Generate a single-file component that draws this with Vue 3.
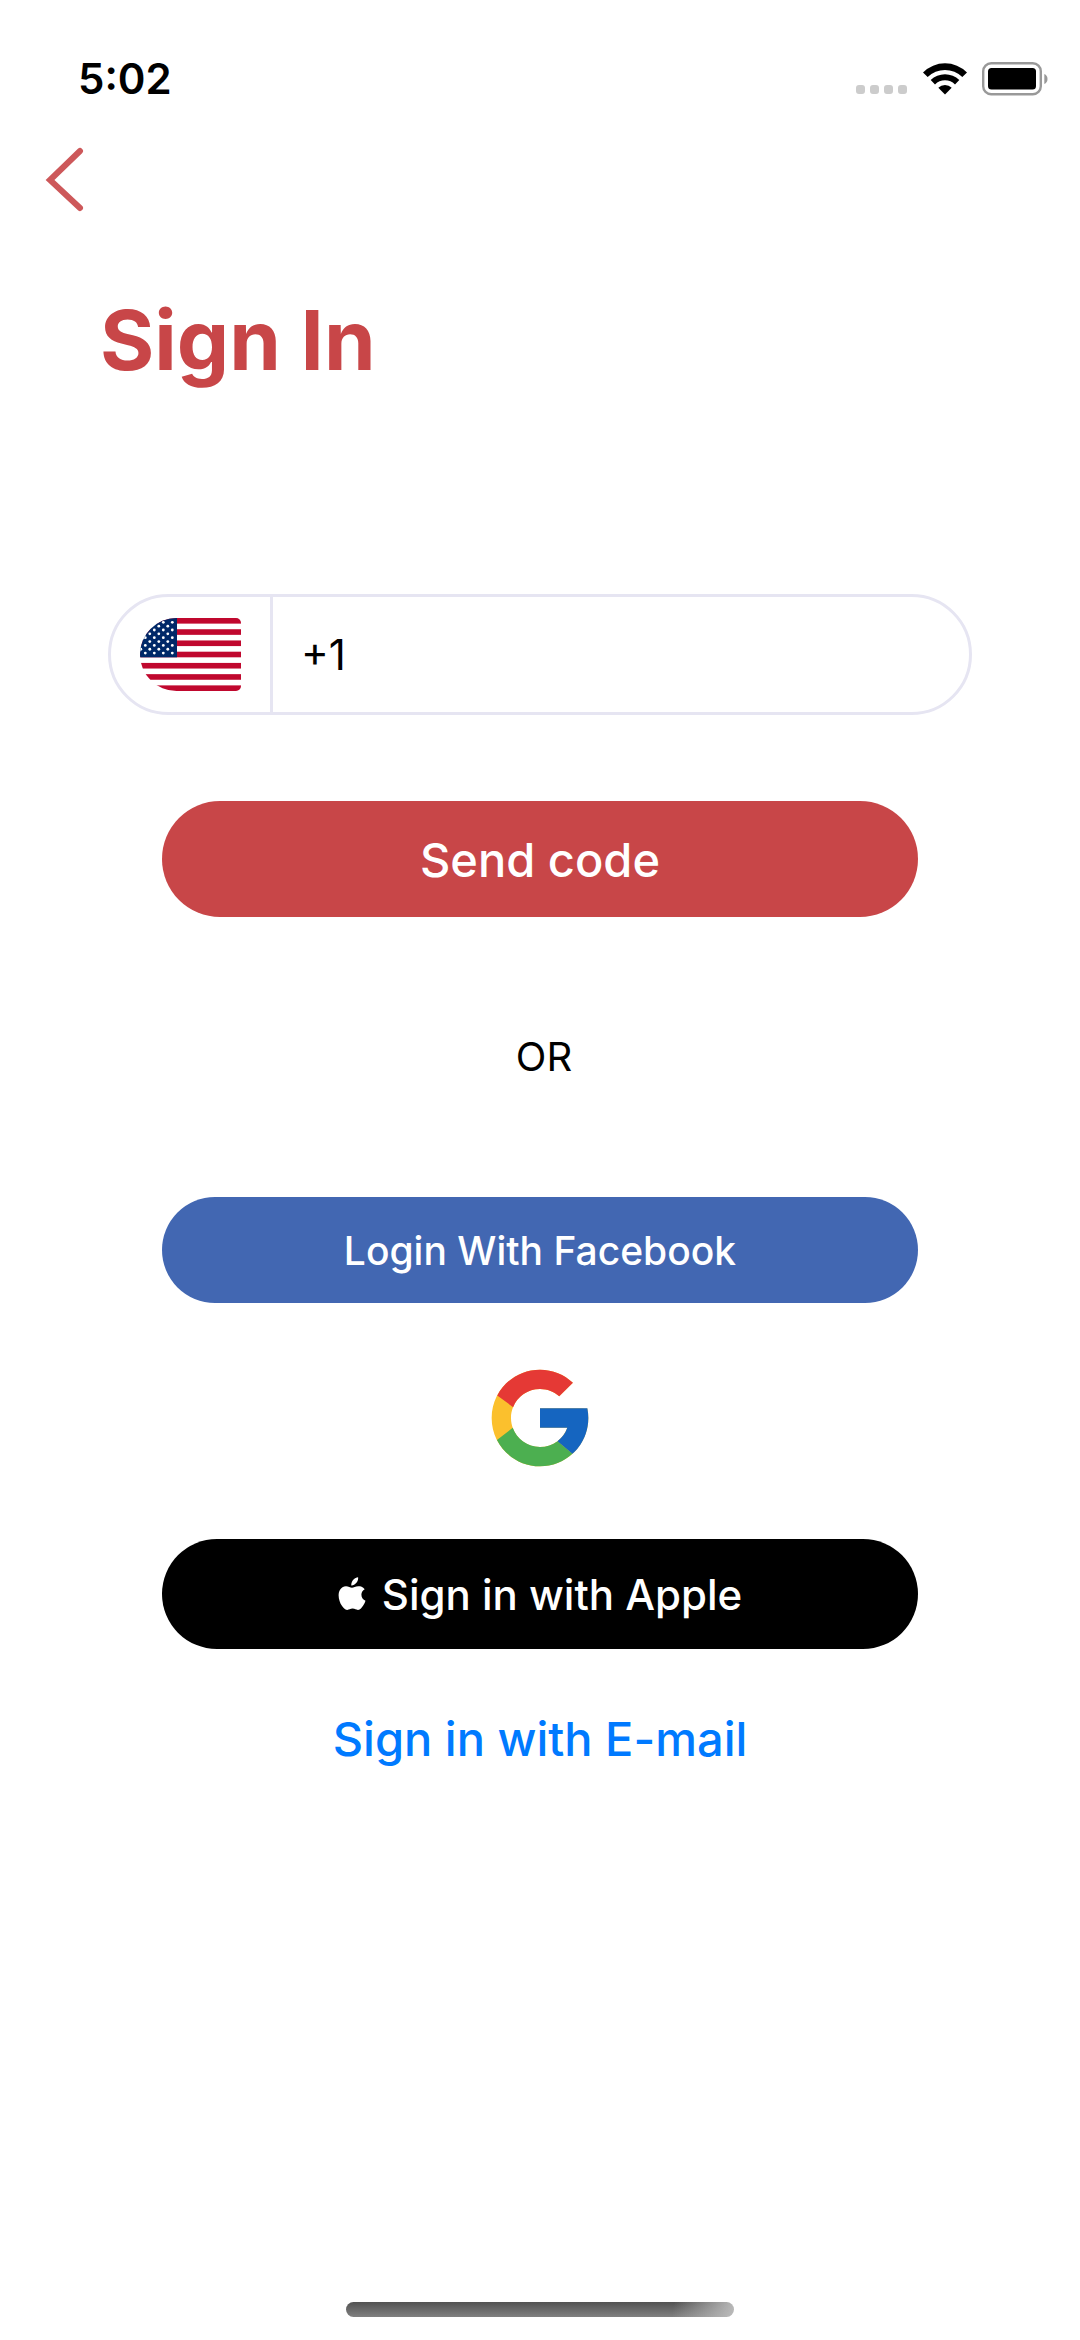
<template>
    <div class="screen">
        <header class="status-bar">
            <span class="time">5:02</span>
            <div class="status-icons">
                <div class="signal">
                    <i v-for="n in 4" :key="n"></i>
                </div>
                <svg class="wifi" width="44" height="32" viewBox="0 0 44 32">
                    <path d="M0 9.4A31.2 31.2 0 0 1 44 9.4L39.3 14.1A24.5 24.5 0 0 0 4.7 14.1Z" />
                    <path d="M7.7 17.1A20.3 20.3 0 0 1 36.3 17.1L32 21.4A14.1 14.1 0 0 0 12 21.4Z" />
                    <path d="M15.3 24.7A9.5 9.5 0 0 1 28.7 24.7L22 31.6Z" />
                </svg>
                <svg class="battery" width="68" height="34" viewBox="0 0 68 34">
                    <rect x="1.2" y="1.2" width="57.6" height="31" rx="8" fill="#fff" stroke="#999" stroke-width="2.4" />
                    <rect x="6" y="6" width="48" height="21.5" rx="3.5" />
                    <path d="M62.3 12A5.5 5.5 0 0 1 62.3 22Z" fill="#999" />
                </svg>
            </div>
        </header>
        <nav class="nav-bar">
            <button class="back" type="button" aria-label="Back" @click="goBack">
                <svg width="40" height="68" viewBox="0 0 40 68">
                    <path d="M36 5L6 34L36 62" fill="none" stroke="#c84648" stroke-opacity=".9" stroke-width="6" stroke-linecap="round" />
                </svg>
            </button>
        </nav>
        <main>
            <h1>Sign In</h1>
            <form @submit.prevent="sendCode">
                <div class="phone-field">
                    <button class="country" type="button" aria-label="Country">
                        <svg width="101" height="73" viewBox="0 0 101 73">
                            <defs>
                                <clipPath id="flagShape">
                                    <path d="M36.5 0H96A5 5 0 0 1 101 5V68A5 5 0 0 1 96 73H36.5A36.5 36.5 0 0 1 36.5 0Z" />
                                </clipPath>
                            </defs>
                            <g clip-path="url(#flagShape)">
                                <rect width="101" height="73" fill="#fff" />
                                <rect v-for="n in 7" :key="n" :y="(n - 1) * 2 * stripe" width="101" :height="stripe" fill="#c0082e" />
                                <rect width="37" :height="stripe * 7" fill="#002868" />
                                <circle v-for="(s, i) in stars" :key="i" :cx="s.x" :cy="s.y" r="1.4" fill="#fff" />
                            </g>
                        </svg>
                    </button>
                    <input v-model="phone" type="tel" aria-label="Phone number">
                </div>
                <button class="btn send" type="submit">Send code</button>
            </form>
            <p class="or">OR</p>
            <button class="btn facebook" type="button">Login With Facebook</button>
            <button class="google" type="button" aria-label="Sign in with Google">
                <svg width="116" height="116" viewBox="0 0 48 48">
                    <path fill="#fbc02d" d="M43.611 20.083H42V20H24v8h11.303c-1.649 4.657-6.08 8-11.303 8-6.627 0-12-5.373-12-12s5.373-12 12-12c3.059 0 5.842 1.154 7.961 3.039l5.657-5.657C34.046 6.053 29.268 4 24 4 12.955 4 4 12.955 4 24s8.955 20 20 20 20-8.955 20-20c0-1.341-.138-2.65-.389-3.917z" />
                    <path fill="#e53935" d="M6.306 14.691l6.571 4.819C14.655 15.108 18.961 12 24 12c3.059 0 5.842 1.154 7.961 3.039l5.657-5.657C34.046 6.053 29.268 4 24 4 16.318 4 9.656 8.337 6.306 14.691z" />
                    <path fill="#4caf50" d="M24 44c5.166 0 9.86-1.977 13.409-5.192l-6.19-5.238C29.211 35.091 26.715 36 24 36c-5.202 0-9.619-3.317-11.283-7.946l-6.522 5.025C9.505 39.556 16.227 44 24 44z" />
                    <path fill="#1565c0" d="M43.611 20.083L43.595 20H24v8h11.303a12.04 12.04 0 0 1-4.087 5.571l.003-.002 6.19 5.238C36.971 39.205 44 34 44 24c0-1.341-.138-2.65-.389-3.917z" />
                </svg>
            </button>
            <button class="btn apple" type="button">
                <svg width="28" height="34" viewBox="0 0 28 34">
                    <path fill="#fff" d="M20.1 0.3C20.4 2.6 19.4 4.7 18.1 6.1C16.8 7.6 15 8.6 13.3 8.4C13.1 6.3 14.1 4.2 15.3 2.8C16.6 1.4 18.5 0.4 20.1 0.3ZM26.7 12.2C24.7 13.4 23.4 15.2 23.4 17.7C23.4 20.5 25.1 22.8 27.5 23.7C27 25.4 26.2 27 25.2 28.5C23.8 30.6 22.3 32.9 20 32.9C17.8 32.9 17.2 31.6 14.6 31.6C12.1 31.6 11.3 32.9 9.2 32.9C7 33 5.4 30.8 3.9 28.7C1.2 24.8-.8 17.8 1.9 13.1C3.2 10.8 5.5 9.3 8 9.2C10.4 9.2 12.3 10.7 14 10.7C15.6 10.7 18 8.9 20.9 9.2C22.1 9.2 25 9.7 26.7 12.2Z" />
                </svg>
                Sign in with Apple
            </button>
            <a class="email" href="#email">Sign in with E-mail</a>
        </main>
        <div class="home-indicator"></div>
    </div>
</template>
<script setup>

import { ref } from 'vue'

const phone = ref("+1")

const stripe = 73 / 13
const stars = []
// nine rows, every second one shifted by half a step
for (let row = 0; row < 9; row++) {
    for (let x = row % 2 ? 27.8 : 32.3; x > 0; x -= 9) {
        stars.push({ x: x, y: 4.3 + row * 3.85 })
    }
}

function goBack() {
    window.history.back()
}

function sendCode() {
    phone.value = phone.value.trim()
}

</script>
<style>
body {
    margin: 0;
    background-color: #fff;
}
</style>
<style scoped>
.screen {
    display: flex;
    flex-direction: column;
    box-sizing: border-box;
    min-height: 100vh;
    padding-bottom: 23px;
    font-family: Inter, "Liberation Sans", sans-serif;
    color: #000;
}
button {
    padding: 0;
    border: none;
    background: none;
    font-family: inherit;
    cursor: pointer;
}
svg {
    display: block;
}
.status-bar {
    display: flex;
    justify-content: space-between;
    align-items: center;
    height: 50px;
    padding: 54px 30px 0 78px;
}
.time {
    font-size: 42px;
    font-weight: 600;
    line-height: 50px;
}
.status-icons {
    display: flex;
    align-items: flex-end;
}
.signal {
    display: flex;
    gap: 5px;
    margin: 0 16px 2px 0;
}
.signal i {
    width: 9px;
    height: 9px;
    border-radius: 3px;
    background-color: #ccc;
}
.wifi {
    margin-right: 15px;
    margin-bottom: 1px;
}
.nav-bar {
    padding: 42px 44px 0;
}
.back {
    display: block;
}
main {
    display: flex;
    flex-direction: column;
    align-items: center;
}
h1 {
    align-self: stretch;
    margin: 76px 100px 204px;
    font-size: 83px;
    font-weight: 700;
    line-height: 100px;
    color: #c84648;
}
form {
    display: flex;
    flex-direction: column;
    align-items: center;
    width: 100%;
}
.phone-field {
    display: flex;
    box-sizing: border-box;
    width: 80%;
    height: 121px;
    margin-bottom: 86px;
    border: 3px solid #e6e5f2;
    border-radius: 61px;
    overflow: hidden;
}
.country {
    padding: 0 29px;
    border-right: 3px solid #e6e5f2;
}
.phone-field input {
    flex: 1;
    min-width: 0;
    padding: 0 28px;
    border: none;
    outline: none;
    background: none;
    font-family: inherit;
    font-size: 42px;
    color: #000;
}
.btn {
    display: flex;
    justify-content: center;
    align-items: center;
    width: 70%;
    border-radius: 58px;
    color: #fff;
    font-weight: 500;
}
.send {
    height: 116px;
    background-color: #c84648;
    font-size: 47px;
}
.or {
    margin: 110px 0;
    padding-left: 8px;
    font-size: 40px;
    line-height: 60px;
}
.facebook {
    height: 106px;
    background-color: #4267b2;
    font-size: 39px;
}
.google {
    margin: 57px 0 63px;
}
.apple {
    gap: 16px;
    height: 110px;
    background-color: #000;
    font-size: 42px;
}
.email {
    margin-top: 60px;
    font-size: 47px;
    font-weight: 500;
    line-height: 60px;
    color: #007aff;
    text-decoration: none;
}
.home-indicator {
    width: 36%;
    height: 15px;
    margin: auto auto 0;
    border-radius: 8px;
    background: linear-gradient(100deg, transparent 84%, #bbb 100%), linear-gradient(#525252, #808080);
}
</style>
